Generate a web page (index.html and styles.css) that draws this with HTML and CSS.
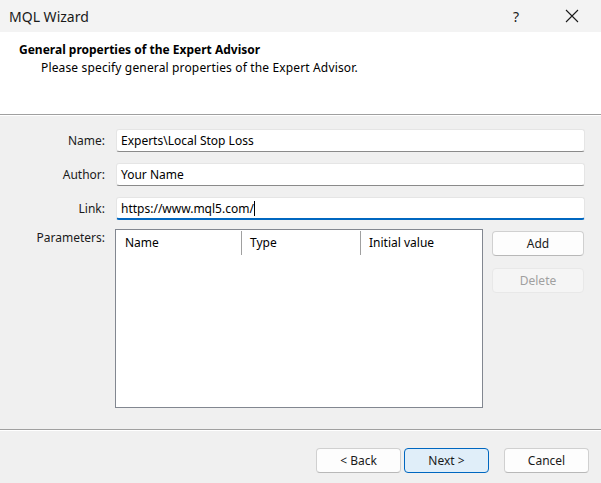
FILE: index.html
```html
<!DOCTYPE html>
<html lang="en">
<head>
    <meta charset="UTF-8">
    <title>MQL Wizard</title>
    <link rel="stylesheet" href="styles.css">
</head>
<body>

<div class="window">
    <div class="titlebar">
        <span class="title">MQL Wizard</span>
        <span class="help">?</span>
        <span class="close">
            <svg width="14" height="14" viewBox="0 0 14 14"><path d="M1 1 L13 13 M13 1 L1 13" stroke="#1a1a1a" stroke-width="1.1" fill="none"/></svg>
        </span>
    </div>

    <div class="header">
        <div class="header-title">General properties of the Expert Advisor</div>
        <div class="header-sub">Please specify general properties of the Expert Advisor.</div>
    </div>

    <div class="form">
        <label class="field-label">Name:</label>
        <div class="field">Experts\Local Stop Loss</div>

        <label class="field-label">Author:</label>
        <div class="field">Your Name</div>

        <label class="field-label">Link:</label>
        <div class="field focused">https://www.mql5.com/<span class="caret"></span></div>

        <label class="field-label params-label">Parameters:</label>
        <div class="params">
            <div class="list">
                <div class="list-head">
                    <div class="col col-name">Name</div>
                    <div class="col col-type">Type</div>
                    <div class="col col-value">Initial value</div>
                </div>
            </div>
            <div class="side-buttons">
                <button class="btn">Add</button>
                <button class="btn" disabled>Delete</button>
            </div>
        </div>
    </div>

    <div class="footer">
        <button class="btn nav">&lt; Back</button>
        <button class="btn nav default">Next &gt;</button>
        <button class="btn nav cancel">Cancel</button>
    </div>
</div>

</body>
</html>
```

FILE: styles.css
```css
body {
    margin: 0;
    font-family: 'Noto Sans', 'Open Sans', sans-serif;
    font-size: 12px;
    color: #000;
    background-color: #f0f0f0;
}
.window {
    width: 601px;
    height: 483px;
    background-color: #f0f0f0;
    display: flex;
    flex-direction: column;
    overflow: hidden;
}
.titlebar {
    height: 32px;
    background-color: #f3f3f3;
    display: flex;
    align-items: center;
    flex-shrink: 0;
}
.title {
    font-size: 14px;
    padding-left: 9px;
    flex: 1;
    color: #1a1a1a;
}
.help {
    font-size: 14px;
    width: 20px;
    margin-right: 32px;
    color: #1a1a1a;
}
.close {
    width: 14px;
    height: 14px;
    margin-right: 22px;
    display: flex;
}
.header {
    height: 83px;
    background-color: #fff;
    border-bottom: 1px solid #a0a0a0;
    box-shadow: 0 1px 0 #fff;
    padding: 9px 0 0 19px;
    box-sizing: border-box;
    flex-shrink: 0;
}
.header-title {
    font-weight: bold;
    line-height: 18px;
}
.header-sub {
    padding-left: 22px;
    line-height: 17px;
    letter-spacing: 0.15px;
}
.form {
    display: grid;
    grid-template-columns: 105px 1fr;
    grid-template-rows: 23px 23px 23px auto;
    align-content: start;
    column-gap: 11px;
    row-gap: 11px;
    padding: 14px 16px 0 0;
    height: 315px;
    box-sizing: border-box;
    border-bottom: 1px solid #a0a0a0;
    box-shadow: 0 1px 0 #fff;
    flex-shrink: 0;
}
.field-label {
    text-align: right;
    line-height: 23px;
    color: #1a1a1a;
}
.field {
    height: 23px;
    line-height: 22px;
    background-color: #fff;
    border: 1px solid #e5e5e5;
    border-bottom-color: #8a8a8a;
    border-radius: 3px;
    box-sizing: border-box;
    padding-left: 4px;
    white-space: nowrap;
}
.field.focused {
    border-bottom: 2px solid #0067c0;
}
.caret {
    display: inline-block;
    width: 1px;
    height: 15px;
    background-color: #000;
    vertical-align: -3px;
}
.params-label {
    line-height: 20px;
    margin-top: -3px;
}
.params {
    display: flex;
    gap: 9px;
    margin-left: -1px;
    margin-top: -2px;
}
.list {
    width: 368px;
    height: 179px;
    background-color: #fff;
    border: 1px solid #828790;
    box-sizing: border-box;
}
.list-head {
    display: flex;
    height: 24px;
    margin-top: 1px;
}
.col {
    line-height: 24px;
    padding-left: 9px;
    box-sizing: border-box;
    border-right: 1px solid #a0a0a0;
}
.col-name {
    width: 126px;
}
.col-type {
    width: 119px;
    padding-left: 8px;
}
.col-value {
    flex: 1;
    border-right: none;
    padding-left: 8px;
}
.side-buttons {
    display: flex;
    flex-direction: column;
    gap: 12px;
    margin-top: 2px;
}
.btn {
    font-family: inherit;
    font-size: 12px;
    width: 92px;
    height: 25px;
    background-color: #fdfdfd;
    border: 1px solid #d0d0d0;
    border-bottom-color: #b8b8b8;
    border-radius: 4px;
    color: #1a1a1a;
    padding: 0;
}
.btn:disabled {
    background-color: #f5f5f5;
    border-color: #e8e8e8;
    color: #a0a0a0;
}
.footer {
    display: flex;
    padding: 18px 0 0 316px;
    gap: 3px;
}
.btn.nav {
    width: 85px;
}
.btn.default {
    background-color: #e0eef9;
    border-color: #0067c0;
}
.btn.cancel {
    margin-left: 12px;
}
```
